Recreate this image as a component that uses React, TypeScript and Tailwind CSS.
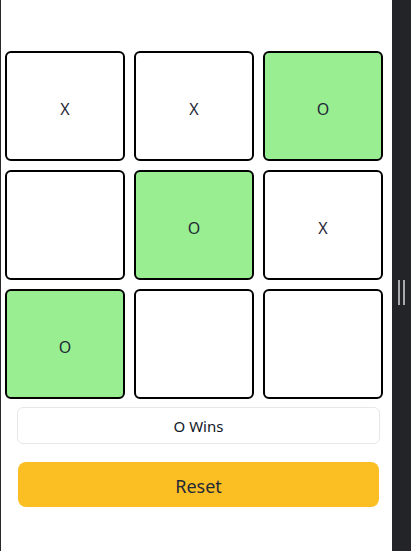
import React, { useState } from "react";

const WIN = [2, 4, 6];

const App = () => {
  const [board] = useState<string[]>(["X", "X", "O", "", "O", "X", "O", "", ""]);
  return (
    <div
      className="flex h-[551px] w-[411px] bg-white"
      style={{ fontFamily: '"Noto Sans", "Open Sans", sans-serif' }}
    >
      {/* Game */}
      <div className="h-full w-[392px] border-l border-[#2a2a2e] pl-[4px] pt-[51px]">
        <div className="grid grid-cols-[repeat(3,120px)] grid-rows-[repeat(3,110px)] gap-[9px]">
          {board.map((cell, i) => (
            <button
              key={i}
              className={`flex items-center justify-center rounded-md border-2 border-black pt-[5px] text-base text-[#1f2937] ${
                WIN.includes(i) ? "bg-[#98ee90]" : "bg-white"
              }`}
            >
              {cell}
            </button>
          ))}
        </div>
        {/* Status */}
        <div className="ml-[12px] mt-[8px] flex h-[37px] w-[363px] items-center justify-center rounded-md border border-[#e5e7eb] pt-[1px] text-[15px] text-[#111827]">
          O Wins
        </div>
        {/* Reset */}
        <button className="ml-[13px] mt-[18px] flex h-[45px] w-[361px] items-center justify-center rounded-lg bg-[#fbbf24] pt-[3px] text-[18px] text-[#1f2937]">
          Reset
        </button>
      </div>
      {/* Splitter */}
      <div className="flex h-full flex-1 justify-center bg-[#232428] pt-[280px]">
        <div className="flex gap-[3px]">
          <div className="h-[25px] w-[2px] bg-[#a8a8ad]" />
          <div className="h-[25px] w-[2px] bg-[#a8a8ad]" />
        </div>
      </div>
    </div>
  );
};

export default App;
